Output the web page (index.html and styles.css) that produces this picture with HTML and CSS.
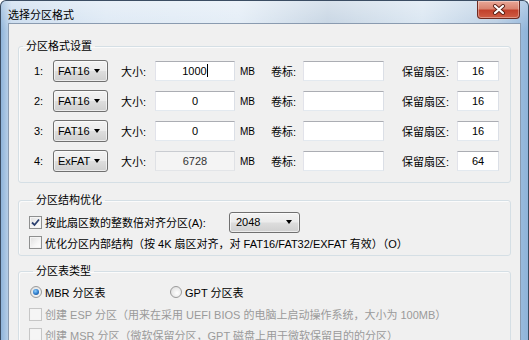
FILE: index.html
```html
<!DOCTYPE html>
<html lang="zh-CN">
<head>
<meta charset="UTF-8">
<title>选择分区格式</title>
<link rel="stylesheet" href="styles.css">
</head>
<body>
    <div class="window">
        <div class="titlebar">
            <span class="title">选择分区格式</span>
            <div class="close">
                <svg width="14" height="11" viewBox="0 0 14 11">
                    <path d="M3 2 L11 9 M11 2 L3 9" stroke="#5a1e14" stroke-width="4" stroke-linecap="round"/>
                    <path d="M3 2 L11 9 M11 2 L3 9" stroke="#fff" stroke-width="2.2" stroke-linecap="round"/>
                </svg>
            </div>
        </div>

        <div class="client">
            <fieldset class="group group-format">
                <legend>分区格式设置</legend>

                <div class="prow">
                    <span class="num">1:</span>
                    <div class="combo"><span>FAT16</span><i class="arrow"></i></div>
                    <span class="lbl-size">大小:</span>
                    <div class="edit size">1000<i class="caret"></i></div>
                    <span class="mb">MB</span>
                    <span class="lbl-vol">卷标:</span>
                    <div class="edit vol"></div>
                    <span class="lbl-res">保留扇区:</span>
                    <div class="edit res">16</div>
                </div>

                <div class="prow">
                    <span class="num">2:</span>
                    <div class="combo"><span>FAT16</span><i class="arrow"></i></div>
                    <span class="lbl-size">大小:</span>
                    <div class="edit size">0</div>
                    <span class="mb">MB</span>
                    <span class="lbl-vol">卷标:</span>
                    <div class="edit vol"></div>
                    <span class="lbl-res">保留扇区:</span>
                    <div class="edit res">16</div>
                </div>

                <div class="prow">
                    <span class="num">3:</span>
                    <div class="combo"><span>FAT16</span><i class="arrow"></i></div>
                    <span class="lbl-size">大小:</span>
                    <div class="edit size">0</div>
                    <span class="mb">MB</span>
                    <span class="lbl-vol">卷标:</span>
                    <div class="edit vol"></div>
                    <span class="lbl-res">保留扇区:</span>
                    <div class="edit res">16</div>
                </div>

                <div class="prow">
                    <span class="num">4:</span>
                    <div class="combo"><span>ExFAT</span><i class="arrow"></i></div>
                    <span class="lbl-size">大小:</span>
                    <div class="edit size readonly">6728</div>
                    <span class="mb">MB</span>
                    <span class="lbl-vol">卷标:</span>
                    <div class="edit vol"></div>
                    <span class="lbl-res">保留扇区:</span>
                    <div class="edit res">64</div>
                </div>
            </fieldset>

            <fieldset class="group group-align">
                <legend>分区结构优化</legend>
                <div class="crow">
                    <span class="check checked">
                        <svg width="9" height="9" viewBox="0 0 9 9"><path d="M1 4.5 L3.5 7 L8 1.5" fill="none" stroke="#2c4170" stroke-width="1.8"/></svg>
                    </span>
                    <span class="align-label">按此扇区数的整数倍对齐分区(A):</span>
                    <div class="combo combo-wide"><span>2048</span><i class="arrow"></i></div>
                </div>
                <div class="crow short">
                    <span class="check"></span>
                    <span>优化分区内部结构（按 4K 扇区对齐，对 FAT16/FAT32/EXFAT 有效）（O）</span>
                </div>
            </fieldset>

            <fieldset class="group group-table">
                <legend>分区表类型</legend>
                <div class="crow">
                    <label class="radio-item first"><span class="radio on"></span>MBR 分区表</label>
                    <label class="radio-item"><span class="radio"></span>GPT 分区表</label>
                </div>
                <div class="crow disabled">
                    <span class="check"></span>
                    <span>创建 ESP 分区（用来在采用 UEFI BIOS 的电脑上启动操作系统，大小为 100MB）</span>
                </div>
                <div class="crow short disabled">
                    <span class="check"></span>
                    <span>创建 MSR 分区（微软保留分区，GPT 磁盘上用于微软保留目的的分区）</span>
                </div>
            </fieldset>
        </div>
    </div>
</body>
</html>
```

FILE: styles.css
```css
* {
    box-sizing: border-box;
}

body {
    margin: 0;
    width: 529px;
    height: 340px;
    overflow: hidden;
    background: #ffffff;
    font-family: "Liberation Sans", "Noto Sans CJK SC", sans-serif;
    font-size: 11px;
    color: #000;
}

.window {
    height: 340px;
    display: flex;
    flex-direction: column;
    padding: 0 7px;
    border: 1px solid #3b4d63;
    border-bottom: none;
    border-radius: 6px 6px 0 0;
    background:
        linear-gradient(180deg, rgba(255,255,255,0.35) 0, rgba(255,255,255,0) 30px),
        linear-gradient(90deg, #8fb4da 0, #c9dbee 2%, #dce8f4 20%, #e2ecf6 45%, #c4d3e2 62%, #d8e5f1 80%, #b7cce2 94%, #8fb4da 100%);
}

.titlebar {
    height: 28px;
    display: flex;
    justify-content: space-between;
    align-items: flex-start;
}

.title {
    padding-top: 6px;
    line-height: 16px;
    font-size: 11px;
}

.close {
    width: 43px;
    height: 18px;
    margin-right: 1px;
    display: flex;
    align-items: center;
    justify-content: center;
    border: 1px solid #6e2a20;
    border-top: none;
    border-radius: 0 0 4px 4px;
    background: linear-gradient(180deg, #e9a797 0, #d98470 45%, #c2412c 55%, #cf5d45 100%);
    box-shadow: inset 0 0 0 1px rgba(255,255,255,0.35);
}

.client {
    flex: 1;
    background: #f0f0f0;
    border: 1px solid #8a9bb0;
    border-bottom: none;
    padding: 14px 9px 0 9px;
}

.group {
    margin: 0;
    border: 1px solid #d5dfe5;
    border-radius: 3px;
    box-shadow: inset 1px 1px 0 #fbfbfb;
    min-width: 0;
}

.group legend {
    margin-left: 4px;
    padding: 0 3px;
    line-height: 16px;
}

.group-format {
    padding: 6px 0 10px 0;
    display: flex;
    flex-direction: column;
    gap: 8px;
}

.group-align {
    margin-top: 9px;
    padding: 3px 0 3px 10px;
}

.group-table {
    margin-top: 7px;
    padding: 2px 0 10px 10px;
}

/* partition rows */
.prow {
    display: flex;
    align-items: center;
    height: 22px;
    padding-left: 15px;
}

.num {
    width: 19px;
}

.lbl-size {
    width: 34px;
    margin-left: 13px;
}

.mb {
    width: 31px;
    margin-left: 5px;
    font-size: 10px;
}

.lbl-vol {
    width: 32px;
}

.lbl-res {
    width: 55px;
    margin-left: 18px;
}

.edit {
    height: 20px;
    line-height: 18px;
    text-align: center;
    background: #fff;
    border: 1px solid;
    border-color: #abadb3 #dbdfe6 #e3e9ef #e2e3ea;
    font-size: 11px;
}

.edit.size {
    width: 80px;
}

.edit.vol {
    width: 81px;
}

.edit.res {
    width: 42px;
}

.edit.readonly {
    background: #f4f4f4;
    border-color: #c9ccd1 #dfe1e5 #e3e5e8 #dfe1e5;
    color: #333;
}

.caret {
    display: inline-block;
    width: 1px;
    height: 13px;
    background: #000;
    vertical-align: -2px;
}

.combo {
    width: 55px;
    height: 22px;
    display: flex;
    align-items: center;
    justify-content: space-between;
    padding: 0 7px 0 4px;
    border: 1px solid #707070;
    border-radius: 3px;
    background: linear-gradient(180deg, #f3f3f3 0, #ebebeb 48%, #dddddd 52%, #cfcfcf 100%);
    box-shadow: inset 0 0 0 1px rgba(255,255,255,0.6);
}

.combo-wide {
    width: 71px;
    height: 21px;
    padding-left: 6px;
}

.arrow {
    width: 0;
    height: 0;
    border-left: 3.5px solid transparent;
    border-right: 3.5px solid transparent;
    border-top: 4px solid #000;
}

/* check and radio rows */
.crow {
    display: flex;
    align-items: center;
    height: 22px;
}

.crow.short {
    height: 19px;
}

.align-label {
    width: 184px;
}

.check {
    width: 13px;
    height: 13px;
    margin-right: 3px;
    display: flex;
    align-items: center;
    justify-content: center;
    border: 1px solid #8e8f8f;
    background: linear-gradient(135deg, #dedede 0, #f6f6f6 60%, #ffffff 100%);
    box-shadow: inset 0 0 0 1px #f4f4f4;
}

.disabled {
    color: #9a9a9a;
}

.disabled .check {
    border-color: #c6c6c6;
    background: #f5f5f5;
}

.radio-item {
    display: flex;
    align-items: center;
}

.radio-item.first {
    width: 141px;
    padding-left: 1px;
}

.radio {
    width: 12px;
    height: 12px;
    margin-right: 3px;
    border: 1px solid #9a9a9a;
    border-radius: 50%;
    background: radial-gradient(circle at 60% 60%, #ffffff 0, #e4e4e4 70%, #d2d2d2 100%);
    display: flex;
    align-items: center;
    justify-content: center;
}

.radio.on::after {
    content: "";
    width: 6px;
    height: 6px;
    border-radius: 50%;
    background: radial-gradient(circle at 40% 35%, #8fd0ff 0, #2a78c8 55%, #173f7a 100%);
}
```
